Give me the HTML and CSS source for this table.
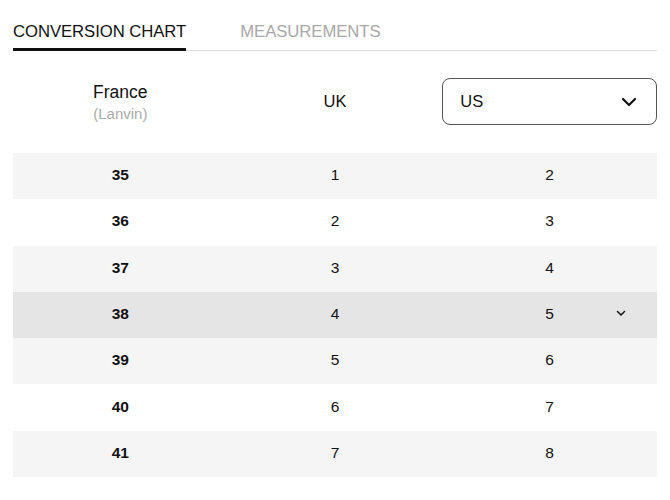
FILE: index.html
```html
<!DOCTYPE html>
<html>
<head>
<meta charset="utf-8">
<link rel="stylesheet" href="styles.css">
</head>
<body>
<div class="page">
  <div class="tabs">
    <div class="tab active">CONVERSION CHART</div>
    <div class="tab">MEASUREMENTS</div>
  </div>
  <div class="head">
    <div class="hcell first">
      <div class="hname wide">France</div>
      <div class="hsub">(Lanvin)</div>
    </div>
    <div class="hcell"><div class="hname">UK</div></div>
    <div class="hcell">
      <div class="select">
        <span>US</span>
        <svg width="16" height="10" viewBox="0 0 16 10"><path d="M2 2 L8 8 L14 2" fill="none" stroke="#111" stroke-width="2.2" stroke-linecap="round" stroke-linejoin="round"/></svg>
      </div>
    </div>
  </div>
  <div class="table">
    <div class="row"><div class="c b">35</div><div class="c">1</div><div class="c">2</div></div>
    <div class="row"><div class="c b">36</div><div class="c">2</div><div class="c">3</div></div>
    <div class="row"><div class="c b">37</div><div class="c">3</div><div class="c">4</div></div>
    <div class="row sel"><div class="c b">38</div><div class="c">4</div><div class="c last">5<svg class="mini" width="10" height="7" viewBox="0 0 10 7"><path d="M1.5 1.5 L5 5 L8.5 1.5" fill="none" stroke="#111" stroke-width="1.5" stroke-linecap="round" stroke-linejoin="round"/></svg></div></div>
    <div class="row"><div class="c b">39</div><div class="c">5</div><div class="c">6</div></div>
    <div class="row"><div class="c b">40</div><div class="c">6</div><div class="c">7</div></div>
    <div class="row"><div class="c b">41</div><div class="c">7</div><div class="c">8</div></div>
  </div>
</div>
</body>
</html>
```
FILE: styles.css
```css
html, body {
  margin: 0;
  padding: 0;
  background: #fff;
}
body {
  font-family: "Liberation Sans", Arial, sans-serif;
  color: #111;
}
.page {
  padding: 0 13px;
}
.tabs {
  display: flex;
  gap: 54px;
  border-bottom: 1px solid #dcdcdc;
}
.tab {
  font-size: 16.7px;
  line-height: 20px;
  padding-top: 22px;
  padding-bottom: 6px;
  border-bottom: 3px solid transparent;
  margin-bottom: -1px;
  color: #a8a8a8;
  letter-spacing: -0.05px;
}
.tab.active {
  color: #111;
  border-bottom-color: #111;
}
.head {
  display: grid;
  grid-template-columns: 1fr 1fr 1fr;
  margin-top: 27px;
  height: 47px;
}
.hcell {
  display: flex;
  flex-direction: column;
  align-items: center;
  justify-content: center;
}
.hcell.first {
  padding-top: 4px;
}
.hname {
  font-size: 16.5px;
  line-height: 21px;
}
.hname.wide {
  font-size: 17.5px;
}
.hsub {
  font-size: 15px;
  line-height: 22px;
  color: #aaa;
}
.select {
  align-self: stretch;
  height: 47px;
  box-sizing: border-box;
  border: 1px solid #555;
  border-radius: 8px;
  display: flex;
  align-items: center;
  justify-content: space-between;
  padding: 0 19px 0 17px;
  font-size: 16.5px;
}
.table {
  margin-top: 28px;
}
.row {
  display: grid;
  grid-template-columns: 1fr 1fr 1fr;
  height: 46.3px;
  align-items: center;
  font-size: 15.5px;
  line-height: 20px;
  padding-bottom: 2px;
  box-sizing: border-box;
}
.row:nth-child(odd) {
  background: #f5f5f5;
}
.row.sel {
  background: #e5e5e5;
}
.c {
  text-align: center;
}
.c.b {
  font-weight: bold;
}
.c.last {
  position: relative;
}
.mini {
  position: absolute;
  right: 31px;
  top: 50%;
  margin-top: -4px;
}
```
